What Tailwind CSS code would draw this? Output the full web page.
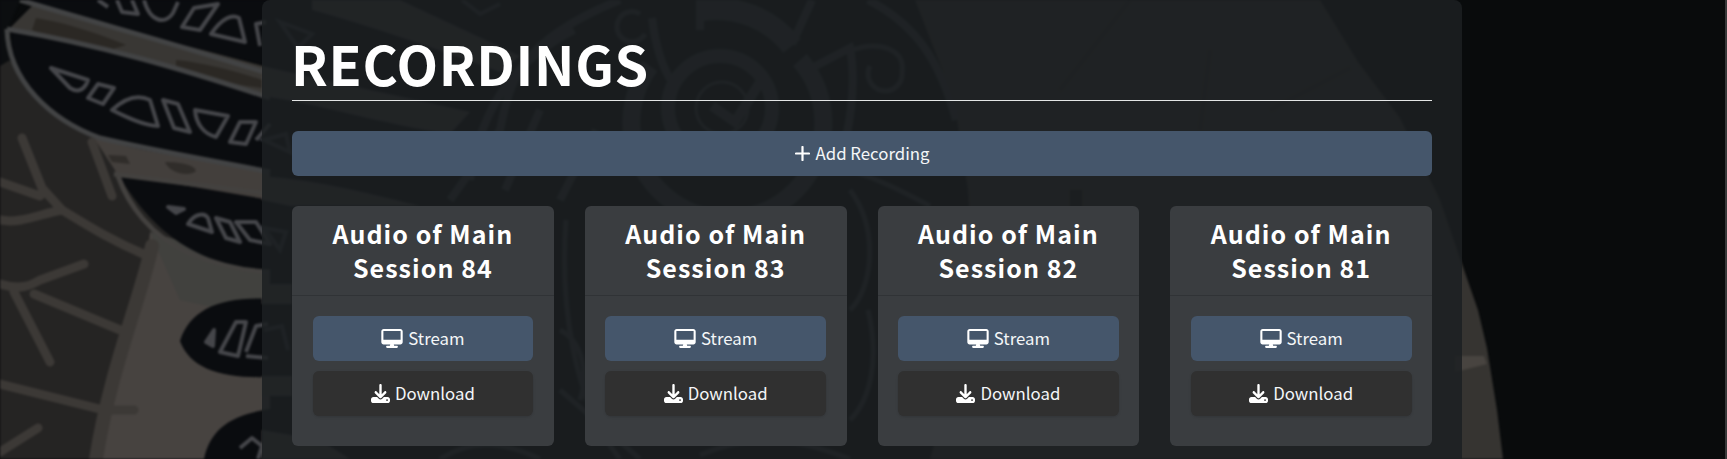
<!DOCTYPE html>
<html lang="en">
<head>
<meta charset="utf-8">
<title>Recordings</title>
<script src="https://cdn.jsdelivr.net/npm/@tailwindcss/browser@4"></script>
</head>
<body class="relative h-[459px] overflow-hidden bg-[#090b0c] font-['Noto_Sans_CJK_JP',sans-serif] text-white">
<svg class="absolute inset-0 -z-10 blur-[1px]" width="1727" height="459" viewBox="0 0 1727 459" fill="none">
  <!-- shell and stone background -->
  <path d="M0 62L8 58L14 66L110 135L270 170V459H0Z" fill="#252423"/>
  <path d="M20 0L270 68V100L10 28L32 6Z" fill="#393734"/>
  <path d="M36 18C60 22 90 30 126 45L110 50C80 46 50 38 32 30ZM176 60C200 62 240 72 262 80V88C230 84 190 76 176 66Z" fill="#2b2824"/>
  <path d="M90 132L270 170V205L120 178Z" fill="#433f3c"/>
  <path d="M108 155L126 156L130 164L112 162ZM165 162C180 162 195 165 196 171C190 177 170 174 165 162Z" fill="#302d2a"/>
  <path d="M150 232L270 268V459H96L104 418L128 334L146 268Z" fill="#474340"/>
  <path d="M150 232L270 268V320L180 300Z" fill="#41413e"/>
  <path d="M18 0H270V66C190 48 100 24 18 0Z" fill="#0a0c0f"/>
  <path d="M0 0H20L8 28L10 60L0 66Z" fill="#0c0e10"/>
  <path d="M12 30C100 45 180 68 270 99V170C190 158 125 150 88 134C50 116 8 80 12 30Z" fill="#0a0c0f"/>
  <path d="M118 174L270 200V271C210 266 160 245 118 174Z" fill="#0a0c0f"/>
  <path d="M270 299C220 296 190 310 180 341C190 368 220 379 270 377ZM270 409C230 415 210 430 204 459H270Z" fill="#0a0c0f"/>
  <g stroke="#424344" stroke-width="5">
    <path d="M20 0C100 24 190 48 270 74M7 29C100 45 180 68 270 98M7 29C8 80 50 120 100 138C160 152 210 160 270 172" />
    <path d="M114 174L270 194M118 176C128 204 150 236 190 254C215 264 240 271 270 272" stroke="#43413f"/>
  </g>
  <g stroke="#45464a" stroke-width="4" stroke-linejoin="round">
    <path d="M98 0L108 7M117 0L122 12L138 14L132 0M144 0C150 22 165 25 173 13L178 2M182 27L194 8L218 4L200 30ZM211 34C222 18 232 14 239 18L245 42ZM266 22L256 24L260 46"/>
    <path d="M51 68L88 80C84 92 76 92 70 88ZM88 98L98 84L114 88L103 104ZM112 110C125 98 138 94 150 100L158 126C145 126 128 118 112 110ZM163 100L178 104L190 132L174 128ZM195 110L228 116L216 137C204 134 196 124 195 110ZM230 142L240 122L256 122L246 144ZM256 140L270 124"/>
    <path d="M168 207L184 209L176 213Z" fill="#45464a"/>
    <path d="M188 224C194 214 204 212 208 218L212 232ZM216 218L230 222L240 242L226 238ZM236 222L256 222L270 244L250 240Z"/>
    <path d="M206 342L214 330L213 346Z" fill="#45464a"/>
    <path d="M220 352L236 322L246 322L238 356ZM246 352L256 326L268 324M246 356L268 358M240 448L252 438L262 446L258 459"/>
  </g>
  <g stroke="#3c3936" stroke-width="9" stroke-linecap="round">
    <path d="M22 138L42 188L62 210M0 182L40 196M0 220C20 224 40 214 62 210C85 224 110 240 148 256" />
    <path d="M0 284C20 290 30 286 40 280L84 264M14 292L50 362M34 294L125 332M0 384L104 410H134M0 452L38 428M92 142L112 196"/>
    <path d="M152 246C140 300 110 370 96 459" stroke-width="14"/>
  </g>

  <!-- feathers behind the left of the panel -->
  <path d="M312 0H400L520 56L500 72C440 50 370 26 312 10ZM262 66C340 84 410 98 470 112L450 134C380 124 320 104 262 96ZM262 176C320 180 380 196 420 206H290L262 200ZM262 284H292V304H262ZM262 376H292V396H262ZM262 430L320 440L350 459H262Z" fill="#42403e"/>
  <path d="M280 22L312 34L298 48ZM264 140L286 134L290 152ZM264 228L286 232L280 250ZM264 330L282 326L288 350M462 0L480 14L500 4" stroke="#303338" stroke-width="4"/>

  <!-- stone wall -->
  <path d="M915 0H1320L1358 62L1400 118L1440 200L1462 264L1478 310L1487 348L1497 410L1503 459H930L975 300L968 190L954 100Z" fill="#363431"/>
  <path d="M1455 356H1484L1487 364L1455 372Z" fill="#484440"/>
  <path d="M1070 190h12v230h-12z" fill="#151617"/>
  <path d="M1130 0L1060 90M1210 50L1200 130M1350 68L1270 110" stroke="#2e2d2c" stroke-width="4"/>

  <!-- carved medallion -->
  <g stroke="#33373a">
    <path d="M702 10A96 96 0 0 1 792 46" stroke-width="22"/>
    <path d="M800 60A96 96 0 1 1 650 66" stroke-width="18"/>
    <circle cx="720" cy="108" r="52" stroke-width="14"/>
    <circle cx="722" cy="108" r="26" stroke-width="3"/>
    <path d="M712 106L735 122L764 76" stroke-width="10"/>
    <path d="M868 0C915 24 940 60 956 120M792 44L812 0M804 72L850 48C856 80 852 130 836 170M700 0V30M652 18C656 50 664 70 672 82M574 30C520 58 482 100 470 180M620 0C520 40 510 80 500 130L450 200M540 110L505 190M596 130L560 200" stroke-width="8"/>
    <path d="M852 50C880 40 906 50 902 72A17 17 0 1 1 870 66M645 34A15 15 0 1 1 640 14M566 220C560 300 572 400 620 459M850 190C880 230 872 290 850 310M850 420C870 400 880 360 868 310M560 330C580 340 590 370 580 400M440 459C470 440 500 440 540 459M850 170C880 180 900 190 930 206M560 390L640 459M700 455C760 430 800 440 850 459" stroke-width="5"/>
  </g>
</svg>

<main class="ml-[262px] h-[470px] w-[1200px] rounded-t-lg bg-[#1c2022]/86 px-[30px] pt-[30px]">
  <h1 class="-ml-px h-[70px] text-[54px] leading-[65px] font-bold tracking-[0.7px]">RECORDINGS</h1>
  <hr class="border-t border-[#e4e6e6]">
  <button class="mt-[30px] flex h-[45px] w-full items-center justify-center gap-[6px] rounded-md bg-[#45566b] text-[16.8px] text-[#f4f6f8]">
    <svg width="15" height="15" viewBox="0 0 15 15" stroke="#fff" stroke-width="2.2" stroke-linecap="round"><path d="M7.500 1v13M1 7.500h13"/></svg>
    <span>Add Recording</span>
  </button>
  <div id="cards" class="mt-[30px] grid grid-cols-4 gap-[31px]"></div>
</main>
<div class="absolute top-0 right-0 h-full w-[2px] bg-[#38393a]"></div>

<template id="card">
  <section class="h-[240px] rounded-md bg-[#3a3d40]">
    <h2 class="h-[90px] border-b border-[#303336] pt-[10px] text-center text-[25px] leading-[34px] font-bold tracking-[1.05px]">Audio of Main<br>Session <span data-n></span></h2>
    <div class="flex flex-col gap-[10px] px-[20.5px] pt-5">
      <button class="flex h-[45px] items-center justify-center gap-[5px] rounded-md bg-[#45566b] text-[16.8px] text-[#f4f6f8]">
        <svg width="22" height="19" viewBox="0 0 576 512" fill="#fff"><path d="M64 0C28.700 0 0 28.700 0 64v288c0 35.300 28.700 64 64 64h176l-10.700 32H160c-17.700 0-32 14.300-32 32s14.300 32 32 32h256c17.700 0 32-14.300 32-32s-14.300-32-32-32h-69.300L336 416h176c35.300 0 64-28.700 64-64V64c0-35.300-28.700-64-64-64H64zM520 56v232H56V56h464z"/></svg>
        <span>Stream</span>
      </button>
      <button class="flex h-[45px] items-center justify-center gap-[5px] rounded-md bg-[#303030] text-[16.8px] text-[#f4f6f8] shadow-sm">
        <svg width="19" height="19" viewBox="0 0 512 512" fill="#fff"><path d="M288 32c0-17.700-14.300-32-32-32s-32 14.300-32 32v242.700l-73.400-73.400c-12.500-12.500-32.800-12.500-45.300 0s-12.500 32.800 0 45.300l128 128c12.500 12.500 32.800 12.500 45.300 0l128-128c12.500-12.500 12.500-32.800 0-45.300s-32.800-12.500-45.300 0L288 274.700V32zM64 352c-35.300 0-64 28.700-64 64v32c0 35.300 28.700 64 64 64h384c35.300 0 64-28.700 64-64v-32c0-35.300-28.700-64-64-64H346.500l-45.300 45.300c-25 25-65.500 25-90.500 0L165.500 352H64z"/><circle cx="432" cy="432" r="24" fill="#303030"/></svg>
        <span>Download</span>
      </button>
    </div>
  </section>
</template>
<script>
for (const n of [84, 83, 82, 81]) {
  const c = document.getElementById('card').content.cloneNode(true);
  c.querySelector('[data-n]').textContent = n;
  document.getElementById('cards').append(c);
}
</script>
</body>
</html>
